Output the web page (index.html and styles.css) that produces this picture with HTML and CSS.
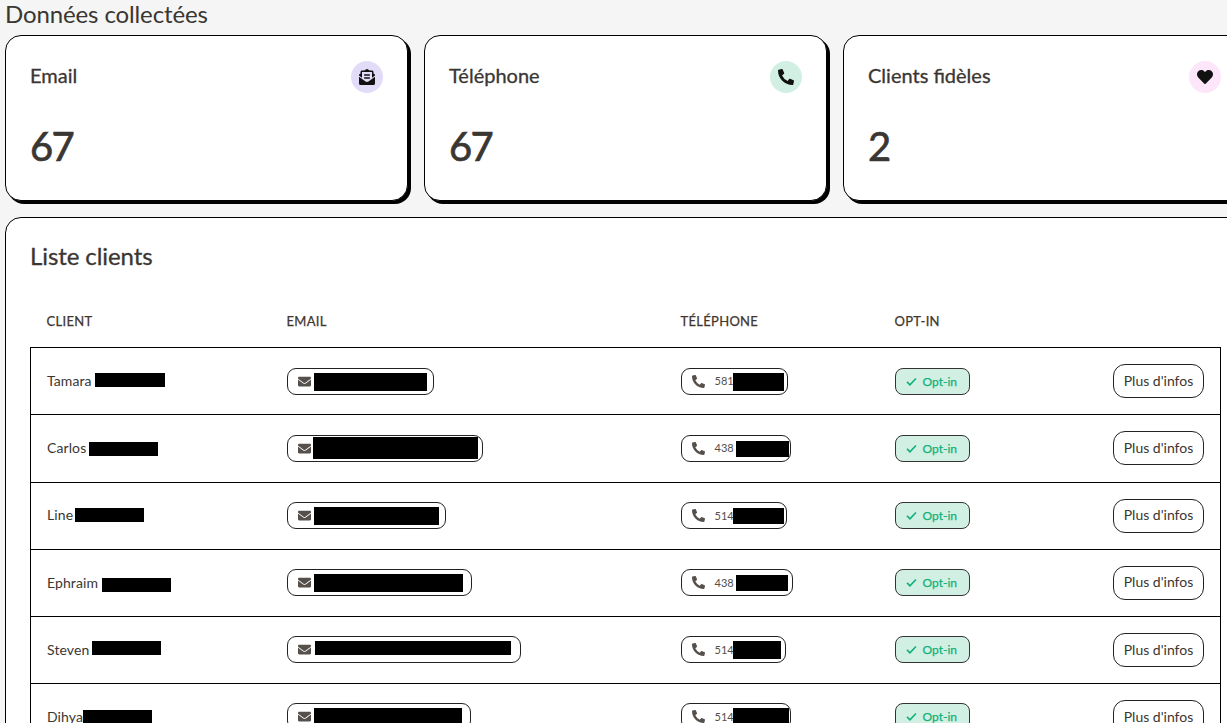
FILE: index.html
```html
<!DOCTYPE html>
<html lang="fr">
<head>
<meta charset="utf-8">
<title>Données collectées</title>
<link rel="stylesheet" href="styles.css">
</head>
<body>
<svg class="sprite" aria-hidden="true">
  <symbol id="i-open" viewBox="0 0 512 512"><path d="M176 216h160c8.84 0 16-7.16 16-16v-16c0-8.84-7.16-16-16-16H176c-8.84 0-16 7.16-16 16v16c0 8.84 7.16 16 16 16zm-16 80c0 8.84 7.16 16 16 16h160c8.84 0 16-7.16 16-16v-16c0-8.84-7.16-16-16-16H176c-8.84 0-16 7.16-16 16v16zm96 121.13c-16.42 0-32.84-5.06-46.86-15.19L0 250.86V464c0 26.51 21.49 48 48 48h416c26.51 0 48-21.49 48-48V250.86L302.86 401.94c-14.02 10.12-30.44 15.19-46.86 15.19zm237.61-254.18c-8.85-6.94-17.24-13.47-29.61-22.81V96c0-26.51-21.49-48-48-48h-77.55c-3.04-2.2-5.87-4.26-9.04-6.56C312.6 29.17 279.2-.35 256 0c-23.2-.35-56.59 29.17-73.41 41.44-3.17 2.3-6 4.36-9.04 6.56H96c-26.51 0-48 21.49-48 48v44.14c-12.37 9.33-20.76 15.87-29.61 22.81A47.995 47.995 0 0 0 0 200.72v10.65l96 69.35V96h320v184.72l96-69.35v-10.65c0-14.74-6.78-28.67-18.39-37.77z"/></symbol>
  <symbol id="i-phone" viewBox="0 0 512 512"><path d="M497.39 361.8l-112-48a24 24 0 0 0-28 6.9l-49.6 60.6A370.66 370.66 0 0 1 130.6 204.11l60.6-49.6a23.94 23.94 0 0 0 6.9-28l-48-112A24.16 24.16 0 0 0 122.6.61l-104 24A24 24 0 0 0 0 48c0 256.5 207.9 464 464 464a24 24 0 0 0 23.4-18.6l24-104a24.29 24.29 0 0 0-14.01-27.6z"/></symbol>
  <symbol id="i-heart" viewBox="0 0 512 512"><path d="M462.3 62.6C407.5 15.9 326 24.3 275.7 76.2L256 96.5l-19.7-20.3C186.1 24.3 104.5 15.9 49.7 62.6c-62.8 53.6-66.1 149.8-9.9 207.9l193.5 199.8c12.5 12.9 32.8 12.9 45.3 0l193.5-199.8c56.3-58.1 53-154.3-9.8-207.9z"/></symbol>
  <symbol id="i-mail" viewBox="0 0 512 512"><path d="M502.3 190.8c3.9-3.1 9.7-.2 9.7 4.7V400c0 26.5-21.5 48-48 48H48c-26.5 0-48-21.5-48-48V195.6c0-5 5.7-7.8 9.7-4.7 22.4 17.4 52.1 39.5 154.1 113.6 21.1 15.4 56.7 47.8 92.2 47.6 35.7.3 72-32.8 92.3-47.6 102-74.1 131.6-96.3 154-113.7zM256 320c23.2.4 56.6-29.2 73.4-41.4 132.7-96.3 142.8-104.7 173.4-128.7 5.8-4.5 9.2-11.5 9.2-18.9v-19c0-26.5-21.5-48-48-48H48C21.5 64 0 85.5 0 112v19c0 7.4 3.4 14.3 9.2 18.9 30.6 23.9 40.7 32.4 173.4 128.7 16.8 12.2 50.2 41.8 73.4 41.4z"/></symbol>
  <symbol id="i-check" viewBox="0 0 16 16"><path d="M2.5 8.5l3.6 3.6 7.4-7.8" fill="none" stroke="currentColor" stroke-width="2"/></symbol>
</svg>
<main class="page">
  <h1 class="title">Données collectées</h1>
  <section class="stats">
    <article class="card">
      <div class="card-head"><h2 class="card-label">Email</h2><span class="badge badge-purple"><svg class="badge-icon"><use href="#i-open"/></svg></span></div>
      <p class="card-value">67</p>
    </article>
    <article class="card">
      <div class="card-head"><h2 class="card-label">Téléphone</h2><span class="badge badge-green"><svg class="badge-icon"><use href="#i-phone"/></svg></span></div>
      <p class="card-value">67</p>
    </article>
    <article class="card">
      <div class="card-head"><h2 class="card-label">Clients fidèles</h2><span class="badge badge-pink"><svg class="badge-icon"><use href="#i-heart"/></svg></span></div>
      <p class="card-value">2</p>
    </article>
  </section>
  <section class="panel">
    <h2 class="panel-title">Liste clients</h2>
    <table class="clients">
      <thead>
        <tr><th class="col-client">Client</th><th class="col-email">Email</th><th class="col-phone">Téléphone</th><th class="col-opt">Opt-in</th><th class="col-action"></th></tr>
      </thead>
      <tbody>
        <tr class="row-1">
          <td><div class="name-cell"><span class="name">Tamara</span><span class="redact redact-name"></span></div></td>
          <td><span class="pill pill-email"><svg class="pill-icon"><use href="#i-mail"/></svg><span class="redact redact-mail"></span></span></td>
          <td><span class="pill pill-phone"><svg class="pill-icon"><use href="#i-phone"/></svg><span class="num">581</span><span class="redact redact-tel"></span></span></td>
          <td><span class="opt"><svg class="opt-icon"><use href="#i-check"/></svg>Opt-in</span></td>
          <td class="cell-action"><button class="more" type="button">Plus d'infos</button></td>
        </tr>
        <tr class="row-2">
          <td><div class="name-cell"><span class="name">Carlos</span><span class="redact redact-name"></span></div></td>
          <td><span class="pill pill-email"><svg class="pill-icon"><use href="#i-mail"/></svg><span class="redact redact-mail"></span></span></td>
          <td><span class="pill pill-phone"><svg class="pill-icon"><use href="#i-phone"/></svg><span class="num">438</span><span class="redact redact-tel"></span></span></td>
          <td><span class="opt"><svg class="opt-icon"><use href="#i-check"/></svg>Opt-in</span></td>
          <td class="cell-action"><button class="more" type="button">Plus d'infos</button></td>
        </tr>
        <tr class="row-3">
          <td><div class="name-cell"><span class="name">Line</span><span class="redact redact-name"></span></div></td>
          <td><span class="pill pill-email"><svg class="pill-icon"><use href="#i-mail"/></svg><span class="redact redact-mail"></span></span></td>
          <td><span class="pill pill-phone"><svg class="pill-icon"><use href="#i-phone"/></svg><span class="num">514</span><span class="redact redact-tel"></span></span></td>
          <td><span class="opt"><svg class="opt-icon"><use href="#i-check"/></svg>Opt-in</span></td>
          <td class="cell-action"><button class="more" type="button">Plus d'infos</button></td>
        </tr>
        <tr class="row-4">
          <td><div class="name-cell"><span class="name">Ephraim</span><span class="redact redact-name"></span></div></td>
          <td><span class="pill pill-email"><svg class="pill-icon"><use href="#i-mail"/></svg><span class="redact redact-mail"></span></span></td>
          <td><span class="pill pill-phone"><svg class="pill-icon"><use href="#i-phone"/></svg><span class="num">438</span><span class="redact redact-tel"></span></span></td>
          <td><span class="opt"><svg class="opt-icon"><use href="#i-check"/></svg>Opt-in</span></td>
          <td class="cell-action"><button class="more" type="button">Plus d'infos</button></td>
        </tr>
        <tr class="row-5">
          <td><div class="name-cell"><span class="name">Steven</span><span class="redact redact-name"></span></div></td>
          <td><span class="pill pill-email"><svg class="pill-icon"><use href="#i-mail"/></svg><span class="redact redact-mail"></span></span></td>
          <td><span class="pill pill-phone"><svg class="pill-icon"><use href="#i-phone"/></svg><span class="num">514</span><span class="redact redact-tel"></span></span></td>
          <td><span class="opt"><svg class="opt-icon"><use href="#i-check"/></svg>Opt-in</span></td>
          <td class="cell-action"><button class="more" type="button">Plus d'infos</button></td>
        </tr>
        <tr class="row-6">
          <td><div class="name-cell"><span class="name">Dihya</span><span class="redact redact-name"></span></div></td>
          <td><span class="pill pill-email"><svg class="pill-icon"><use href="#i-mail"/></svg><span class="redact redact-mail"></span></span></td>
          <td><span class="pill pill-phone"><svg class="pill-icon"><use href="#i-phone"/></svg><span class="num">514</span><span class="redact redact-tel"></span></span></td>
          <td><span class="opt"><svg class="opt-icon"><use href="#i-check"/></svg>Opt-in</span></td>
          <td class="cell-action"><button class="more" type="button">Plus d'infos</button></td>
        </tr>
      </tbody>
    </table>
  </section>
</main>
</body>
</html>
```
FILE: styles.css
```css
* { box-sizing: border-box; }
html, body { height: 723px; margin: 0; overflow: hidden; }
body { background: #f5f5f5; color: #3a3632; font-family: "Lato", "Noto Sans", sans-serif; }
.sprite { display: none; }
.page { width: 1246px; height: 723px; padding-left: 5px; overflow: hidden; }
.title { margin: 0; height: 35px; padding-top: 1px; font-size: 24px; line-height: 26px; font-weight: 400; letter-spacing: -0.12px; }
.stats { display: grid; grid-template-columns: repeat(3, 403px); gap: 16px; }
.card { height: 166px; padding: 24px 24px 0; background: #fff; border: 1px solid #000; border-radius: 16px; box-shadow: 3px 3px 0 #000; }
.card-head { display: flex; justify-content: space-between; align-items: center; height: 32px; }
.card-label { margin: 0 0 2px; font-size: 20px; font-weight: 400; -webkit-text-stroke: 0.3px currentColor; }
.badge { display: flex; align-items: center; justify-content: center; width: 32px; height: 32px; margin-bottom: -2px; border-radius: 50%; }
.badge-purple { background: #e2dcf9; }
.badge-green { background: #d1f0e3; }
.badge-pink { background: #fde6f9; }
.badge-icon { width: 16px; height: 16px; fill: #111; }
.card-value { margin: 30px 0 0; font-size: 40px; line-height: 48px; font-weight: 400; letter-spacing: -1.8px; -webkit-text-stroke: 0.7px currentColor; }
.panel { margin-top: 16px; height: 600px; padding: 22px 24px 24px; background: #fff; border: 1px solid #000; border-radius: 16px; }
.panel-title { margin: 0; height: 32px; font-size: 24px; line-height: 32px; font-weight: 400; letter-spacing: -0.08px; -webkit-text-stroke: 0.3px currentColor; }
.clients { width: 1191px; margin-top: 27px; table-layout: fixed; border-collapse: collapse; font-size: 14px; }
.clients th { height: 48px; padding: 0 0 4px 16px; text-align: left; font-size: 13px; font-weight: 400; letter-spacing: 0.3px; text-transform: uppercase; color: #43352e; -webkit-text-stroke: 0.25px currentColor; }
.col-client { width: 240px; }
.col-email { width: 394px; }
.col-phone { width: 214px; }
.col-opt { width: 150px; }
.clients tbody { border: 1px solid #000; }
.clients tbody tr { height: 67px; border-bottom: 1px solid #000; }
.clients tbody .row-2 { height: 68px; }
.clients td { padding: 0 16px; vertical-align: middle; }
.name-cell { display: flex; align-items: center; }
.name { display: block; letter-spacing: 0.1px; }
.redact { display: block; flex: none; background: #000; }
.redact-name { width: 69px; height: 14px; }
.redact-mail { height: 18px; }
.redact-tel { height: 18px; }
.pill { display: flex; align-items: center; height: 27px; padding-left: 10px; border: 1px solid #222; border-radius: 9px; background: #fff; font-size: 11px; color: #55504b; }
.pill-icon { flex: none; width: 13px; height: 13px; fill: #55504b; }
.pill-phone .pill-icon { margin-right: 10px; }
.num { display: block; }
.opt { display: flex; align-items: center; width: 75px; height: 27px; padding-left: 9px; border: 1px solid #333; border-radius: 8px; background: #d1f0e3; color: #10b07a; font-size: 12px; font-weight: 400; -webkit-text-stroke: 0.25px currentColor; }
.opt-icon { width: 13px; height: 13px; margin-right: 5px; }
.cell-action { text-align: right; }
.clients td.cell-action { padding: 0 16px 0 0; }
.more { width: 91px; height: 34px; padding: 0; border: 1px solid #222; border-radius: 12px; background: #fff; color: #3a3632; font: inherit; font-size: 14px; }

.row-1 .pill, .row-1 .opt { margin-top: 2px; }
.row-2 .pill, .row-2 .opt { margin-top: 1px; }
.row-1 .opt, .row-2 .opt { padding-bottom: 1px; }
.row-1 .num, .row-2 .num { margin-bottom: 2px; }
.row-2 .more, .row-3 .more, .row-4 .more { padding-bottom: 2px; }
.row-2 .name, .row-3 .name { margin-bottom: 2px; }

.row-1 .name { width: 48px; } .row-1 .redact-name { width: 70px; margin-bottom: 2px; }
.row-2 .name { width: 42px; } .row-2 .redact-name { margin-top: 2px; }
.row-3 .name { width: 28px; } .row-3 .redact-name { margin-bottom: 2px; }
.row-4 .name { width: 55px; } .row-4 .redact-name { margin-top: 4px; }
.row-5 .name { width: 45px; } .row-5 .redact-name { margin-bottom: 4px; }
.row-6 .name { width: 36px; }

.row-1 .pill-email { width: 147px; } .row-1 .redact-mail { width: 113px; margin-left: 3px; }
.row-2 .pill-email { width: 196px; } .row-2 .redact-mail { width: 165px; height: 22px; margin-left: 2px; margin-bottom: 2px; }
.row-3 .pill-email { width: 159px; } .row-3 .redact-mail { width: 125px; margin-left: 3px; }
.row-4 .pill-email { width: 185px; } .row-4 .redact-mail { width: 149px; margin-left: 3px; }
.row-5 .pill-email { width: 234px; } .row-5 .redact-mail { width: 196px; height: 14px; margin-left: 4px; margin-bottom: 3px; }
.row-6 .pill-email { width: 184px; } .row-6 .redact-mail { width: 148px; margin-left: 3px; }

.row-1 .pill-phone { width: 107px; } .row-1 .num { width: 18px; } .row-1 .redact-tel { width: 51px; }
.row-2 .pill-phone { width: 110px; } .row-2 .num { width: 21px; } .row-2 .redact-tel { width: 53px; height: 16px; }
.row-3 .pill-phone { width: 106px; } .row-3 .num { width: 18px; } .row-3 .redact-tel { width: 51px; height: 16px; }
.row-4 .pill-phone { width: 112px; } .row-4 .num { width: 21px; } .row-4 .redact-tel { width: 52px; height: 16px; }
.row-5 .pill-phone { width: 105px; } .row-5 .num { width: 18px; } .row-5 .redact-tel { width: 48px; }
.row-6 .pill-phone { width: 110px; } .row-6 .num { width: 18px; } .row-6 .redact-tel { width: 56px; }
```
